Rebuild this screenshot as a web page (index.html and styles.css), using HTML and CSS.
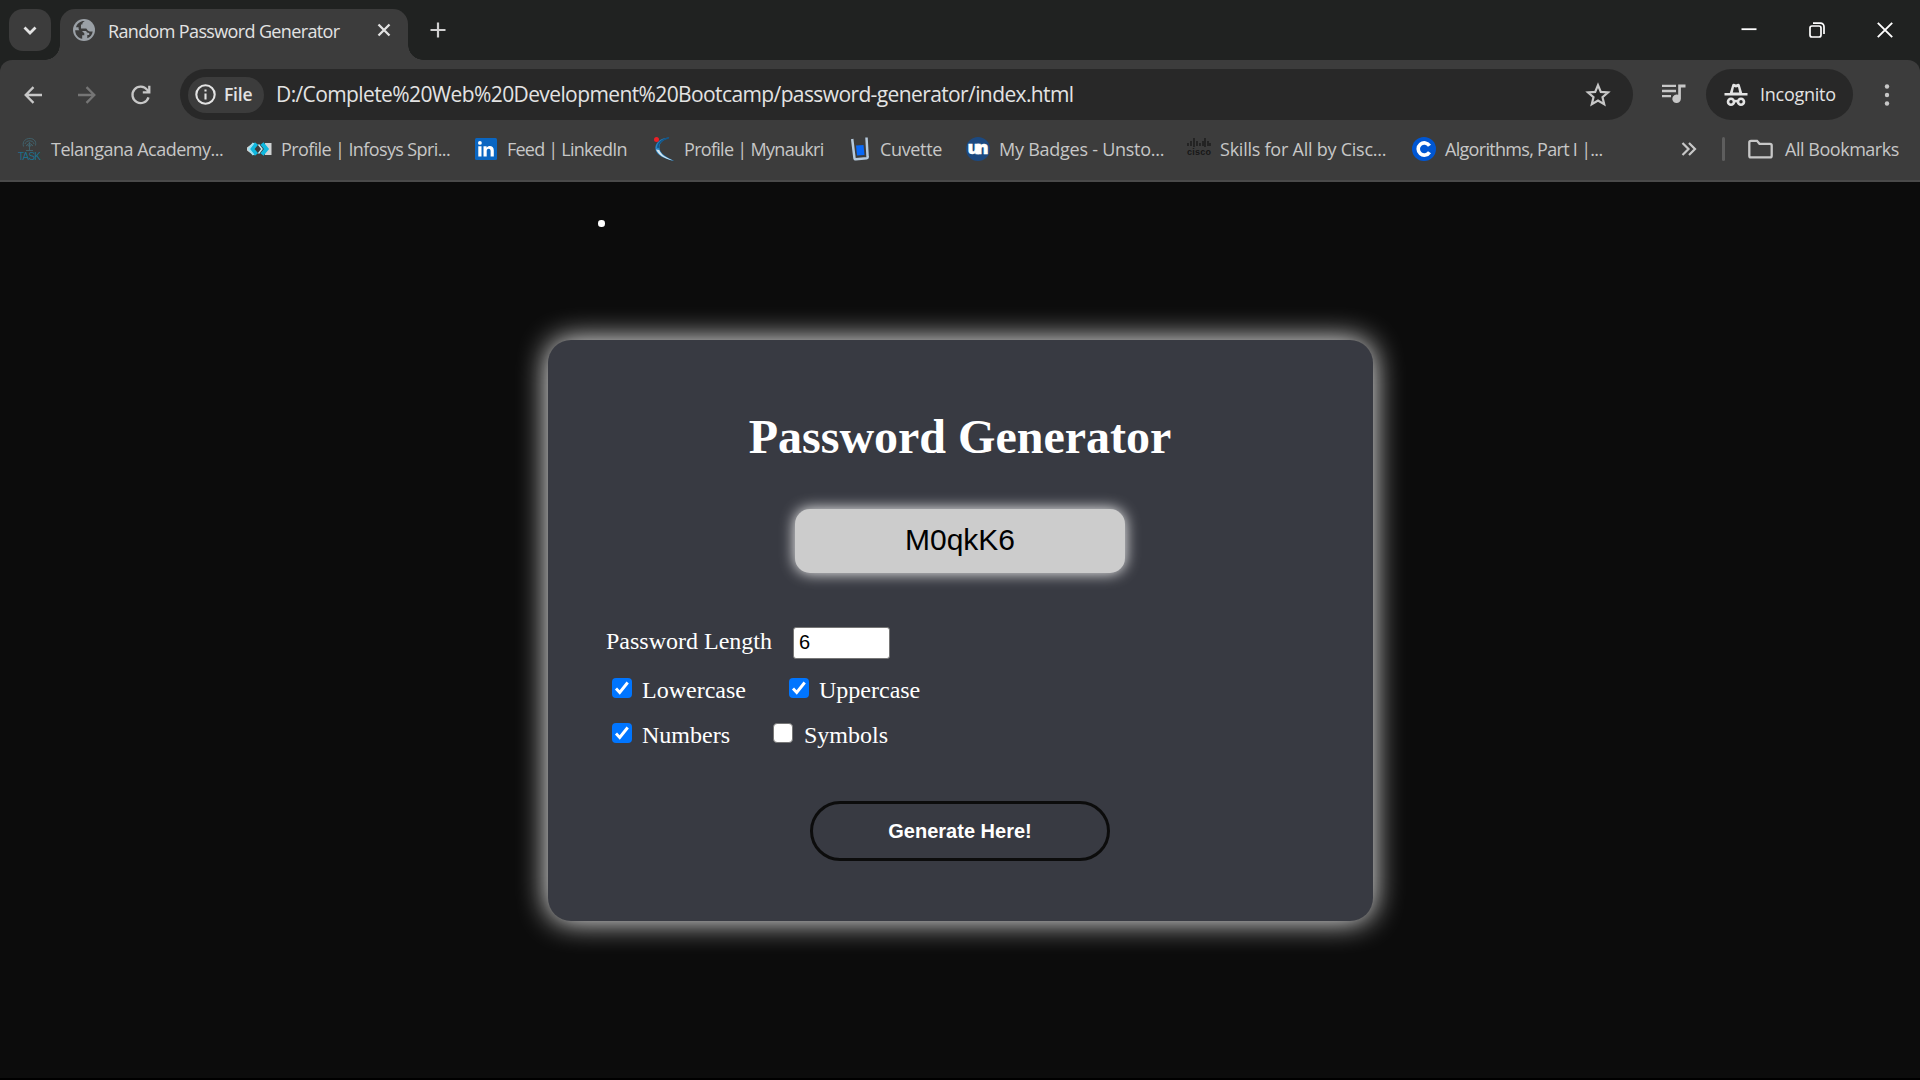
FILE: index.html
```html
<!DOCTYPE html>
<html lang="en">
<head>
<meta charset="utf-8">
<title>Random Password Generator</title>
<link rel="stylesheet" href="styles.css">
</head>
<body>
<div class="browser">
  <header class="tabstrip">
    <button class="tab-search" aria-label="Search tabs">
      <svg width="14" height="9" viewBox="0 0 14 9"><path d="M1.500 1.500 7 7l5.500-5.500" fill="none" stroke="#e3e3e3" stroke-width="2.800"/></svg>
    </button>
    <div class="tab">
      <svg class="globe" width="22" height="22" viewBox="0 0 22 22"><circle cx="11" cy="11" r="11" fill="#9aa0a6"/><path d="M2.200 11.200H8.200L11.300 14.200V16.200H9.200V19.800C5 19 2.200 15.500 2.200 11.200ZM11.800 2.100C10.200 3 9.200 4.200 9.300 5.600H8v4h5.300c.8 1 1.400 2.800 3.500 2.800h2.900c-.4 3.300-2.500 5.800-5.400 6.900v-3.200h1.900v-2.200c-1.700 0-2.600-1-3.100-2H7.800C6 11.900 5.300 10 5.600 8.200H3c1.300-4 5-6.500 8.800-6.100Z" fill="#3c3c3c"/></svg>
      <span class="tab-title">Random Password Generator</span>
      <svg class="tab-close" width="14" height="14" viewBox="0 0 14 14"><path d="m1.500 1.500 11 11m0-11-11 11" stroke="#e3e3e3" stroke-width="2.300"/></svg>
    </div>
    <svg class="new-tab" width="16" height="16" viewBox="0 0 16 16"><path d="M8 .5v15M.5 8h15" stroke="#d0d0d0" stroke-width="2.200"/></svg>
    <div class="window-controls">
      <svg width="16" height="16" viewBox="0 0 16 16"><path d="M.5 7.200h15" stroke="#fff" stroke-width="1.800"/></svg>
      <svg width="16" height="16" viewBox="0 0 16 16" fill="none" stroke="#fff" stroke-width="1.700"><rect x="1" y="4" width="11" height="11" rx="2"/><path d="M4 1.200h7.500a3.500 3.500 0 0 1 3.500 3.500V12"/></svg>
      <svg width="16" height="16" viewBox="0 0 16 16"><path d="m.8.800 14.400 14.400m0-14.400L.8 15.200" stroke="#fff" stroke-width="1.900"/></svg>
    </div>
  </header>

  <nav class="toolbar">
    <div class="nav-buttons">
      <svg width="18" height="18" viewBox="0 0 18 18" fill="none" stroke="#c7c7c7" stroke-width="2.300"><path d="M18 9H1.800M9.500 1.100 1.700 9l7.800 7.900"/></svg>
      <svg width="18" height="18" viewBox="0 0 18 18" fill="none" stroke="#757575" stroke-width="2.300"><path d="M0 9h16.200M8.500 1.100 16.300 9l-7.800 7.900"/></svg>
      <svg width="20" height="20" viewBox="0 0 20 20" fill="none" stroke="#c7c7c7" stroke-width="2.300"><path d="M17.500 12.300A8.200 8.200 0 1 1 16.200 4.900L18 7M18.300.8v6.500h-6.500"/></svg>
    </div>
    <div class="omnibox">
      <div class="file-chip">
        <svg width="21" height="21" viewBox="0 0 21 21" fill="none" stroke="#e3e3e3" stroke-width="2.100"><circle cx="10.500" cy="10.500" r="9.200"/><path d="M10.500 9.500v6M10.500 5.500v2.100"/></svg>
        <span class="file-label">File</span>
      </div>
      <span class="url">D:/Complete%20Web%20Development%20Bootcamp/password-generator/index.html</span>
      <svg class="star" width="24" height="24" viewBox="0 0 24 24"><path d="m12 2.200 2.800 6.700 7.200.6-5.500 4.700 1.700 7L12 17.500l-6.200 3.700 1.700-7L2 9.500l7.200-.6Z" fill="none" stroke="#c7c7c7" stroke-width="2.200"/></svg>
    </div>
    <svg class="media" width="24" height="20" viewBox="0 0 24 20"><path d="M0 1.800h14M0 7h14M0 12.200h9" stroke="#c7c7c7" stroke-width="2.300"/><path d="M16.200.6H23.500v3h-4.600v11.200a4.300 4.300 0 1 1-2.700-4Z" fill="#c7c7c7"/></svg>
    <div class="incognito">
      <svg width="24" height="24" viewBox="0 0 24 24"><path d="M5.800 10 8.200 2C8.500.900 9.200.5 10 .8l2 .7 2-.7c.8-.3 1.500.1 1.800 1.200L18.200 10h5.300v2.400H.5V10Z" fill="#e3e3e3"/><path d="M10 4 8.800 9.600h6.400L14 4l-2 .6Z" fill="#282828"/><g fill="none" stroke="#e3e3e3" stroke-width="2.600"><circle cx="7" cy="18.800" r="3"/><circle cx="17" cy="18.800" r="3"/><path d="M10 18.500c1.300-.7 2.700-.7 4 0"/></g></svg>
      <span class="incognito-label">Incognito</span>
    </div>
    <svg class="menu" width="6" height="24" viewBox="0 0 6 24" fill="#c7c7c7"><circle cx="3" cy="3.500" r="2.200"/><circle cx="3" cy="12" r="2.200"/><circle cx="3" cy="20.500" r="2.200"/></svg>
  </nav>

  <div class="bookmarks">
    <div class="bookmark">
      <svg width="24" height="24" viewBox="0 0 24 24"><g fill="none" stroke="#40616b" stroke-width="1"><path d="M5.500 9.500C2.500-.7 20-1.500 17.500 8.500M7 7c1-4 8-4.500 9 0M8 9l3.500-3L15 9M11.500 5v9M9 7l2.500 3L14 7M8 13.500h7"/></g><text x="0" y="23" class="task-mark" textLength="23">TASK</text></svg>
      <span class="bm-telangana">Telangana Academy...</span>
    </div>
    <div class="bookmark">
      <svg width="25" height="24" viewBox="0 0 25 24"><path d="M18 6h6.500v12H18zM6 6h3L5 12l4 6H6L0 13.500v-3Z" fill="#d0d3d4"/><path d="m9.500 6.500-4.500 5.500 4.500 5.500M15 6.500l4.500 5.500-4.500 5.500" fill="none" stroke="#0fb8df" stroke-width="4"/><path d="m6.500 6-4.500 6 4.500 6" fill="none" stroke="#9be0f2" stroke-width="2"/><path d="m11.500 7.500 3.500 4.500-3.500 4.500" fill="none" stroke="#c9eef7" stroke-width="1.400"/></svg>
      <span class="bm-infosys">Profile | Infosys Spri...</span>
    </div>
    <div class="bookmark wide">
      <svg width="22" height="22" viewBox="0 0 22 22"><rect width="22" height="22" rx="1.500" fill="#0a66c2"/><path d="M3.300 8.300h3.200v10.200H3.300zM8.500 8.300h3.100v1.400c1.700-2.600 7.200-2.400 7.200 2.500v6.300h-3.200v-5.500c0-3-3.900-2.800-3.900 0v5.500H8.500z" fill="#fff"/><circle cx="4.900" cy="4.900" r="1.900" fill="#fff"/></svg>
      <span class="bm-linkedin">Feed | LinkedIn</span>
    </div>
    <div class="bookmark">
      <svg width="21" height="24" viewBox="0 0 21 24"><path d="M15.500.5C5 1 .5 7 1.500 12.500c.8 5 8 9.500 19 11.500C12 20 6 16.500 5.500 11 5 7 8 3 15.500.5Z" fill="#2683c4"/><path d="M2 12.500C4 17.500 10 21.500 19 23.500 9 19.500 6.500 16 5.300 13Z" fill="#d5e5ee"/><path d="M15 .7C8 2 3.500 6.500 4 11" fill="none" stroke="#145789" stroke-width="1.600"/><circle cx="2.500" cy="2.500" r="2.500" fill="#eb2027"/></svg>
      <span class="bm-naukri">Profile | Mynaukri</span>
    </div>
    <div class="bookmark cuvette">
      <svg width="18" height="24" viewBox="0 0 18 24"><path d="m1.200 2 2.300 19.300q.2 1.200 1.400 1l10.700-1q1.200-.2 1-1.500L15.500.5" fill="none" stroke="#b5c9dc" stroke-width="2.500"/><path d="m5 8.500 7.500-.5 1 10-7.500.5Z" fill="#0868f7"/></svg>
      <span class="bm-cuvette">Cuvette</span>
    </div>
    <div class="bookmark">
      <svg width="24" height="24" viewBox="0 0 24 24"><circle cx="12" cy="12" r="12" fill="#1c4980"/><text x="1.500" y="17" class="un-mark" textLength="21">un</text></svg>
      <span class="bm-unstop">My Badges - Unsto...</span>
    </div>
    <div class="bookmark">
      <svg width="24" height="24" viewBox="0 0 24 24"><path d="M1 6v3M4 4v5M7 1v9M10 4v5M13 6v3M16 4v5M18 1v9M21 4v5M23 6v3" stroke="#171717" stroke-width="1.300"/><text x="0" y="18" class="cisco-mark" textLength="24">cisco</text></svg>
      <span class="bm-cisco">Skills for All by Cisc...</span>
    </div>
    <div class="bookmark">
      <svg width="24" height="24" viewBox="0 0 24 24"><circle cx="12" cy="12" r="12" fill="#0056d2"/><path d="M17.500 8.800A6.100 6.100 0 1 0 17.500 15.200" fill="none" stroke="#fff" stroke-width="3.600"/></svg>
      <span class="bm-algorithms">Algorithms, Part I |...</span>
    </div>
    <svg class="overflow" width="16" height="14" viewBox="0 0 16 14"><path d="m1.500 1 6 6-6 6m6.500-12 6 6-6 6" fill="none" stroke="#c7c7c7" stroke-width="2.200"/></svg>
    <div class="divider"></div>
    <div class="bookmark folder">
      <svg width="25" height="20" viewBox="0 0 25 20"><path d="M3 1.800h6l2.500 3H22q1.700 0 1.700 1.700V16.700q0 1.700-1.700 1.700H3q-1.700 0-1.700-1.700V3.500Q1.300 1.800 3 1.800Z" fill="none" stroke="#c7c7c7" stroke-width="2.300"/></svg>
      <span class="bm-all">All Bookmarks</span>
    </div>
  </div>

  <main class="page">
    <div class="bullet"></div>
    <section class="card">
      <h1>Password Generator</h1>
      <div class="password">M0qkK6</div>
      <div class="options">
        <div class="length-row">
          <label>Password Length</label>
          <div class="length-input">6</div>
        </div>
        <div class="check-row">
          <i class="check on"><svg width="20" height="20" viewBox="0 0 20 20"><path d="m4 10.600 3.700 3.900L15.700 4.500" fill="none" stroke="#fff" stroke-width="2.900"/></svg></i><label class="lowercase">Lowercase</label>
          <i class="check on"><svg width="20" height="20" viewBox="0 0 20 20"><path d="m4 10.600 3.700 3.900L15.700 4.500" fill="none" stroke="#fff" stroke-width="2.900"/></svg></i><label>Uppercase</label>
        </div>
        <div class="check-row">
          <i class="check on"><svg width="20" height="20" viewBox="0 0 20 20"><path d="m4 10.600 3.700 3.900L15.700 4.500" fill="none" stroke="#fff" stroke-width="2.900"/></svg></i><label class="numbers">Numbers</label>
          <i class="check"></i><label class="symbols">Symbols</label>
        </div>
      </div>
      <button class="generate">Generate Here!</button>
    </section>
  </main>
</div>
</body>
</html>
```
FILE: styles.css
```css
* { box-sizing: border-box; }
body { margin: 0; background: #0c0c0c; overflow: hidden; }
svg { display: block; flex: none; overflow: visible; }
button { border: 0; padding: 0; }

.browser {
  display: flex;
  flex-direction: column;
  width: 1920px;
  height: 1080px;
  font-family: "Open Sans", "Noto Sans", sans-serif;
  font-size: 18px;
  color: #c7c7c7;
  white-space: nowrap;
  background: #202221;
}

/* Tab strip */
.tabstrip { display: flex; height: 60px; padding-left: 9px; }
.tab-search {
  display: grid;
  place-items: center;
  width: 42px;
  height: 42px;
  margin: 9px 9px 0 0;
  border-radius: 14px;
  background: #3c3c3c;
}
.tab {
  position: relative;
  display: flex;
  align-items: center;
  width: 348px;
  margin-top: 9px;
  padding: 0 17px 9px 13px;
  border-radius: 15px 15px 0 0;
  background: #3c3c3c;
  color: #e3e3e3;
}
.tab::before, .tab::after {
  content: "";
  position: absolute;
  bottom: 0;
  width: 15px;
  height: 15px;
}
.tab::before { left: -15px; background: radial-gradient(circle at 0 0, transparent 14.5px, #3c3c3c 15px); }
.tab::after { right: -15px; background: radial-gradient(circle at 100% 0, transparent 14.5px, #3c3c3c 15px); }
.tab-title { flex: 1; margin: 1px 0 0 13px; letter-spacing: -0.64px; }
.new-tab { margin: 22px 0 0 22px; }
.window-controls { display: flex; gap: 52px; margin: 22px 27px 0 auto; }

/* Toolbar */
.toolbar {
  display: flex;
  align-items: center;
  height: 69px;
  border-radius: 12px 12px 0 0;
  background: #3c3c3c;
}
.nav-buttons { display: flex; align-items: center; gap: 35.500px; width: 180px; padding-left: 24px; }
.omnibox {
  display: flex;
  align-items: center;
  width: 1453px;
  height: 51px;
  padding: 0 23px 0 8px;
  border-radius: 26px;
  background: #282828;
  color: #e3e3e3;
}
.file-chip {
  display: flex;
  align-items: center;
  gap: 8px;
  width: 76px;
  height: 36px;
  padding-left: 7px;
  border-radius: 18px;
  background: #3c3c3c;
}
.file-label { margin-top: -1px; font-size: 17.500px; font-weight: 600; letter-spacing: -0.200px; }
.url { flex: 1; margin: -2px 0 0 12px; font-size: 21px; letter-spacing: -0.610px; }
.media { margin: -2px 0 0 29px; }
.incognito {
  display: flex;
  align-items: center;
  gap: 12px;
  width: 147px;
  height: 51px;
  margin-left: 20px;
  padding-left: 18px;
  border-radius: 26px;
  background: #282828;
  color: #e3e3e3;
}
.incognito-label { margin-top: -1px; letter-spacing: -0.250px; }
.menu { margin-left: 31px; }

/* Bookmarks */
.bookmarks {
  display: grid;
  grid-template-columns: 229px 228px 179px 197px 115px 221px 225px 269px 41px 26px 1fr;
  align-items: center;
  height: 53px;
  padding: 0 0 11px 18px;
  border-bottom: 2px solid #4a4a4a;
  background: #3c3c3c;
}
.bookmark { display: flex; align-items: center; gap: 9px; }
.bookmark.wide { gap: 10px; }
.bookmark.cuvette { gap: 11px; }
.bookmark.folder { gap: 12px; }
.bm-telangana { letter-spacing: -0.490px; }
.bm-infosys { letter-spacing: -0.610px; }
.bm-linkedin { letter-spacing: -0.780px; }
.bm-naukri { letter-spacing: -0.700px; }
.bm-cuvette { letter-spacing: -0.350px; }
.bm-unstop { letter-spacing: -0.250px; }
.bm-cisco { letter-spacing: -0.240px; }
.bm-algorithms { letter-spacing: -0.700px; }
.bm-all { letter-spacing: -0.470px; }
.divider { width: 3px; height: 24px; border-radius: 2px; background: #5e5e5e; }
.task-mark { font: 10px "Liberation Sans", sans-serif; fill: #1c708e; }
.un-mark { font: 800 18px "Open Sans", sans-serif; fill: #fff; stroke: #fff; stroke-width: 0.500px; }
.cisco-mark { font: bold 9px "Liberation Sans", sans-serif; fill: #171717; }

/* Page */
.page {
  position: relative;
  flex: 1;
  padding-top: 158px;
  border-bottom: 2px solid #000;
  background: #0c0c0c;
  color: #fff;
}
.bullet {
  position: absolute;
  left: 598px;
  top: 38px;
  width: 6.500px;
  height: 6.500px;
  border-radius: 50%;
  background: #fff;
}
.card {
  display: flex;
  flex-direction: column;
  align-items: center;
  width: 825px;
  height: 581px;
  margin-left: 548px;
  padding: 69px 1px 0 0;
  border-radius: 23px;
  background: #383a42;
  box-shadow: 0 0 30px #fff;
  font-family: "Liberation Serif", serif;
  font-size: 24px;
}
h1 { margin: 0; font-size: 48px; line-height: 55px; }
.password {
  width: 330px;
  height: 64px;
  margin-top: 45px;
  border-radius: 15px;
  background: #ccc;
  box-shadow: 0 0 15px #fff;
  color: #000;
  font: 30px/62px "Liberation Sans", sans-serif;
  text-align: center;
}
.options { width: 708px; margin-top: 54px; line-height: 27px; }
.length-row { display: flex; height: 51px; gap: 21px; }
.length-row label { margin-top: 1px; }
.length-input {
  width: 97px;
  height: 32px;
  padding-left: 5px;
  border: 1px solid #767676;
  border-radius: 3px;
  background: #fff;
  color: #000;
  font: 20px/28px "Liberation Sans", sans-serif;
}
.check-row { display: flex; height: 45px; padding-left: 6px; }
.check-row label { margin-top: -1px; }
.check {
  width: 20px;
  height: 20px;
  margin-right: 10px;
  border: 1.500px solid #767676;
  border-radius: 4px;
  background: #fff;
}
.check.on { border: 0; background: #0075ff; }
.lowercase { width: 147px; }
.numbers { width: 131px; }
.symbols { padding-left: 1px; }
.generate {
  width: 300px;
  height: 60px;
  margin-top: 33px;
  border: 3px solid #0c0c0c;
  border-radius: 30px;
  background: transparent;
  color: #fff;
  font: bold 20px "Liberation Sans", sans-serif;
}
```
